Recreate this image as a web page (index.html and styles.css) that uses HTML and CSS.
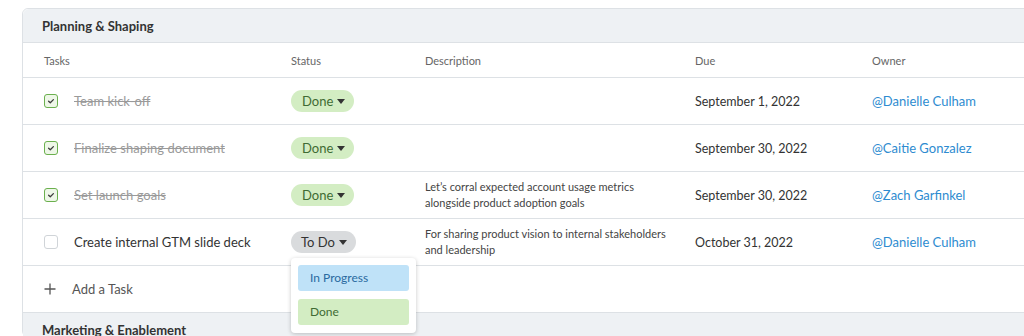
FILE: index.html
```html
<!DOCTYPE html>
<html>
<head>
<meta charset="utf-8">
<link rel="stylesheet" href="styles.css">
</head>
<body>
<div class="card">
  <div class="section-head">Planning &amp; Shaping</div>
  <div class="row head-row">
    <div class="c-task">Tasks</div>
    <div>Status</div>
    <div>Description</div>
    <div>Due</div>
    <div>Owner</div>
  </div>
  <div class="row">
    <div class="c-task"><span class="cb checked"><svg viewBox="0 0 14 14" width="14" height="14"><path d="M4.6 7.2 L6.3 8.8 L9.4 5.6" fill="none" stroke="#3d3d3d" stroke-width="1.3" stroke-linecap="round" stroke-linejoin="round"/></svg></span><span class="tname done">Team kick-off</span></div>
    <div><span class="pill pill-done">Done<span class="caret"></span></span></div>
    <div class="desc"></div>
    <div class="due">September 1, 2022</div>
    <div class="owner">@Danielle Culham</div>
  </div>
  <div class="row">
    <div class="c-task"><span class="cb checked"><svg viewBox="0 0 14 14" width="14" height="14"><path d="M4.6 7.2 L6.3 8.8 L9.4 5.6" fill="none" stroke="#3d3d3d" stroke-width="1.3" stroke-linecap="round" stroke-linejoin="round"/></svg></span><span class="tname done">Finalize shaping document</span></div>
    <div><span class="pill pill-done">Done<span class="caret"></span></span></div>
    <div class="desc"></div>
    <div class="due">September 30, 2022</div>
    <div class="owner">@Caitie Gonzalez</div>
  </div>
  <div class="row">
    <div class="c-task"><span class="cb checked"><svg viewBox="0 0 14 14" width="14" height="14"><path d="M4.6 7.2 L6.3 8.8 L9.4 5.6" fill="none" stroke="#3d3d3d" stroke-width="1.3" stroke-linecap="round" stroke-linejoin="round"/></svg></span><span class="tname done">Set launch goals</span></div>
    <div><span class="pill pill-done">Done<span class="caret"></span></span></div>
    <div class="desc">Let’s corral expected account usage metrics<br>alongside product adoption goals</div>
    <div class="due">September 30, 2022</div>
    <div class="owner">@Zach Garfinkel</div>
  </div>
  <div class="row">
    <div class="c-task"><span class="cb"></span><span class="tname">Create internal GTM slide deck</span></div>
    <div class="status-cell">
      <span class="pill pill-todo">To Do<span class="caret"></span></span>
      <div class="menu">
        <div class="menu-item mi-progress">In Progress</div>
        <div class="menu-item mi-done">Done</div>
      </div>
    </div>
    <div class="desc">For sharing product vision to internal stakeholders<br>and leadership</div>
    <div class="due">October 31, 2022</div>
    <div class="owner">@Danielle Culham</div>
  </div>
  <div class="add-row">
    <svg class="plus" viewBox="0 0 12 12" width="12" height="12"><path d="M6 0.5V11.5M0.5 6H11.5" stroke="#555" stroke-width="1.3"/></svg>
    <span>Add a Task</span>
  </div>
  <div class="section-head second">Marketing &amp; Enablement</div>
</div>
</body>
</html>
```
FILE: styles.css
```css
html, body {
  margin: 0;
  padding: 0;
  background: #fff;
  overflow: hidden;
}
body {
  font-family: Lato, "Open Sans", Arial, sans-serif;
  color: #333;
  width: 1024px;
  height: 336px;
}
.card {
  margin: 8px -30px 0 22px;
  border: 1px solid #dde1e5;
  border-radius: 6px;
  background: #fff;
}
.section-head {
  background: #eef1f4;
  height: 33px;
  line-height: 34px;
  padding-left: 19px;
  font-size: 13px;
  font-weight: 700;
  color: #333;
  border-bottom: 1px solid #dde1e5;
  border-radius: 6px 6px 0 0;
}
.section-head.second {
  border-radius: 0;
  height: 23px;
  line-height: 34px;
  border-bottom: none;
  overflow: visible;
}
.row {
  display: grid;
  grid-template-columns: 268px 134px 270px 177px 1fr;
  align-items: center;
  height: 46px;
  border-bottom: 1px solid #dde1e5;
  font-size: 13px;
}
.row.head-row {
  height: 34px;
  font-size: 11px;
  color: #666;
}
.c-task {
  padding-left: 21px;
  display: flex;
  align-items: center;
}
.cb {
  width: 14px;
  height: 14px;
  box-sizing: border-box;
  border: 1px solid #d0d4d8;
  border-radius: 3px;
  margin-right: 16px;
  display: inline-flex;
  align-items: center;
  justify-content: center;
  flex-shrink: 0;
}
.cb svg {
  display: block;
  margin: -1px;
}
.cb.checked {
  border-color: #6bb04e;
  background: #eef7e8;
}
.tname {
  color: #333;
  font-size: 13px;
}
.tname.done {
  color: #9a9a9a;
  text-decoration: line-through;
}
.pill {
  display: inline-flex;
  align-items: center;
  height: 22px;
  padding: 0 9px 0 11px;
  border-radius: 11px;
  font-size: 13px;
  box-sizing: border-box;
}
.pill-done {
  background: #d3edc3;
  color: #3f6b34;
  width: 63px;
}
.pill-todo {
  background: #d9dbdd;
  color: #333;
  width: 65px;
  padding-left: 10px;
}
.caret {
  width: 0;
  height: 0;
  border-left: 4px solid transparent;
  border-right: 4px solid transparent;
  border-top: 5px solid #333;
  margin-left: 4px;
  margin-top: 1px;
}
.status-cell {
  position: relative;
}
.menu {
  position: absolute;
  left: 0;
  top: 27px;
  width: 125px;
  box-sizing: border-box;
  background: #fff;
  border-radius: 4px;
  box-shadow: 0 1px 4px rgba(0,0,0,0.22);
  padding: 7px 7px 8px;
  z-index: 5;
}
.menu-item {
  height: 26px;
  line-height: 26px;
  border-radius: 3px;
  padding-left: 12px;
  font-size: 12px;
}
.mi-progress {
  background: #bfe2f8;
  color: #2a6aa0;
  margin-bottom: 8px;
}
.mi-done {
  background: #d3edc3;
  color: #3f6b34;
}
.desc {
  font-size: 11px;
  line-height: 16px;
  color: #444;
}
.due {
  font-size: 12.5px;
  color: #333;
}
.owner {
  font-size: 13px;
  color: #2d8bd0;
}
.add-row {
  height: 46px;
  display: flex;
  align-items: center;
  padding-left: 21px;
  border-bottom: 1px solid #dde1e5;
  font-size: 13px;
  color: #555;
}
.plus {
  margin-right: 16px;
}
```
